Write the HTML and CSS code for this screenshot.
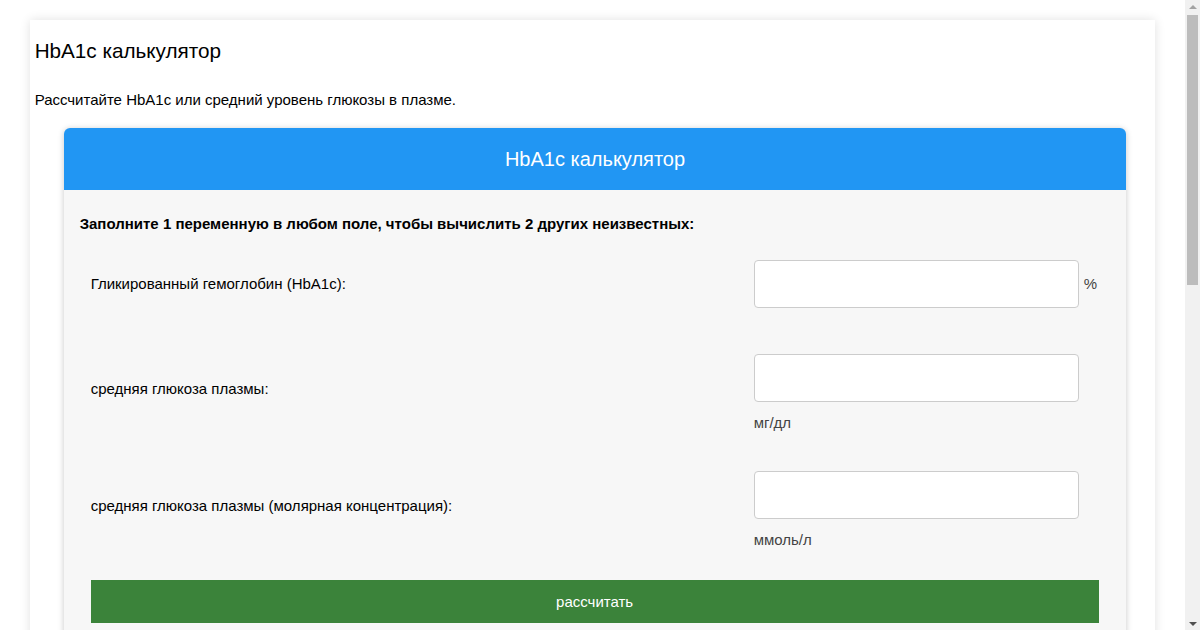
FILE: index.html
```html
<!DOCTYPE html>
<html lang="ru">
<head>
  <meta charset="UTF-8" />
  <meta name="viewport" content="width=device-width, initial-scale=1" />
  <title>HbA1c калькулятор</title>
  <link rel="stylesheet" href="styles.css">
</head>
<body>
  <div class="page">
    <h1 class="page-title">HbA1c калькулятор</h1>
    <p class="intro">Рассчитайте HbA1c или средний уровень глюкозы в плазме.</p>

    <!-- Calculator card -->
    <div class="calc">
      <div class="calc-head">HbA1c калькулятор</div>
      <div class="calc-body">
        <p class="calc-hint">Заполните 1 переменную в любом поле, чтобы вычислить 2 других неизвестных:</p>

        <div class="calc-row row-a1c">
          <label class="calc-label" for="a1c">Гликированный гемоглобин (HbA1c):</label>
          <div class="calc-field inline">
            <input type="text" id="a1c">
            <span class="unit">%</span>
          </div>
        </div>

        <div class="calc-row row-mg">
          <label class="calc-label" for="mg">средняя глюкоза плазмы:</label>
          <div class="calc-field">
            <input type="text" id="mg">
            <span class="unit">мг/дл</span>
          </div>
        </div>

        <div class="calc-row row-mmol">
          <label class="calc-label" for="mmol">средняя глюкоза плазмы (молярная концентрация):</label>
          <div class="calc-field">
            <input type="text" id="mmol">
            <span class="unit">ммоль/л</span>
          </div>
        </div>

        <button class="calc-btn" type="button">рассчитать</button>
        <div class="calc-result"></div>
      </div>
    </div>
  </div>

  <!-- window scrollbar -->
  <div class="scrollbar">
    <span class="scroll-arrow up"></span>
    <span class="scroll-thumb"></span>
    <span class="scroll-arrow down"></span>
  </div>
</body>
</html>
```

FILE: styles.css
```css
body {
  font-family: "Liberation Sans", Arial, sans-serif;
  background-color: #fff;
  color: #000;
  margin: 0 15px 0 0;
}

.page {
  width: 95%;
  margin: 20px auto 0;
  padding: 19px 5px 40px;
  box-sizing: border-box;
  background-color: #fff;
  box-shadow: 0 0 10px rgba(0, 0, 0, 0.12);
}

.page-title {
  font-size: 20.7px;
  font-weight: normal;
  line-height: 24px;
  margin: 0;
}

.intro {
  font-size: 15px;
  line-height: 18px;
  margin: 28px 0 19px;
}

.calc {
  margin: 0 24px 0 29px;
  border-radius: 6px;
  overflow: hidden;
  background-color: #f7f7f7;
  box-shadow: 0 1px 6px rgba(0, 0, 0, 0.22);
}

.calc-head {
  background-color: #2196f3;
  color: #fff;
  font-size: 20px;
  line-height: 62px;
  text-align: center;
}

.calc-body {
  padding: 25px 27px 60px 16px;
}

.calc-hint {
  font-size: 15px;
  font-weight: bold;
  line-height: 18px;
  margin: 0 0 27px;
}

.calc-row {
  display: grid;
  grid-template-columns: 663px auto;
  align-items: center;
  margin-left: 11px;
  font-size: 15px;
}

.row-a1c {
  margin-bottom: 46px;
}

.row-a1c .calc-label {
  margin-bottom: 2px;
}

.row-mg {
  margin-bottom: 39px;
}

.row-mg .calc-label,
.row-mmol .calc-label {
  margin-bottom: 10px;
}

.row-mmol {
  margin-bottom: 31px;
}

.calc-field {
  display: flex;
  flex-direction: column;
  align-items: flex-start;
}

.calc-field.inline {
  flex-direction: row;
  align-items: center;
}

.calc-field input {
  width: 325px;
  height: 48px;
  box-sizing: border-box;
  border: 1px solid #ccc;
  border-radius: 4px;
  background-color: #fff;
  font-size: 15px;
  padding: 0 10px;
}

.unit {
  color: #444;
  line-height: 18px;
  margin-top: 12px;
}

.calc-field.inline .unit {
  margin: 0 0 0 5px;
}

.calc-btn {
  display: block;
  width: 1008px;
  height: 43px;
  margin-left: 11px;
  border: none;
  background-color: #3b833a;
  color: #fff;
  font-family: inherit;
  font-size: 15px;
  cursor: pointer;
}

.calc-result {
  min-height: 120px;
}

.scrollbar {
  position: fixed;
  top: 0;
  right: 0;
  width: 15px;
  height: 100vh;
  background-color: #f1f1f1;
  display: flex;
  flex-direction: column;
  align-items: center;
}

.scroll-arrow {
  width: 0;
  height: 0;
  border-left: 4px solid transparent;
  border-right: 4px solid transparent;
}

.scroll-arrow.up {
  margin-top: 5px;
  border-bottom: 4px solid #a3a3a3;
}

.scroll-arrow.down {
  margin-top: auto;
  margin-bottom: 4px;
  border-top: 4px solid #505050;
}

.scroll-thumb {
  width: 11px;
  height: 270px;
  margin-top: 6px;
  background-color: #bcbcbc;
}
```
